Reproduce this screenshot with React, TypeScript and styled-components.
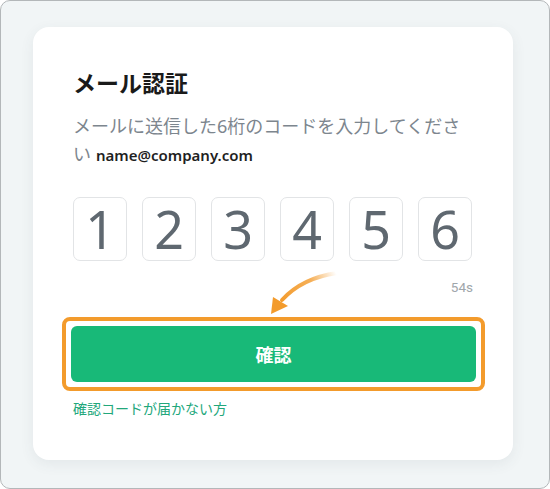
import styled, { createGlobalStyle } from "styled-components";

const GlobalStyle = createGlobalStyle`
  html, body {
    margin: 0;
    padding: 0;
    background: #ffffff;
  }
  * {
    box-sizing: border-box;
  }
`;

const digits = ["1", "2", "3", "4", "5", "6"];

const App = () => {
  return (
    <>
      <GlobalStyle />
      <Frame>
        <Card>
          <Title>メール認証</Title>
          <Description>
            メールに送信した6桁のコードを入力してください
            <Email>name@company.com</Email>
          </Description>
          <CodeRow>
            {digits.map((d) => (
              <DigitBox key={d}>{d}</DigitBox>
            ))}
          </CodeRow>
          <Timer>54s</Timer>
          <Highlight>
            <ConfirmButton type="button">確認</ConfirmButton>
          </Highlight>
          <HelpLink href="#">確認コードが届かない方</HelpLink>
          <Arrow viewBox="0 0 90 55" aria-hidden>
            <defs>
              <linearGradient id="tail" x1="74" y1="6" x2="17" y2="36" gradientUnits="userSpaceOnUse">
                <stop offset="0" stopColor="#f39b2c" stopOpacity="0" />
                <stop offset="0.4" stopColor="#f39b2c" stopOpacity="0.8" />
                <stop offset="1" stopColor="#f39b2c" stopOpacity="1" />
              </linearGradient>
            </defs>
            <path d="M75 6 Q40 11 20 33" fill="none" stroke="url(#tail)" strokeWidth="4" strokeLinecap="round" />
            <polygon points="9,47 11,30 26,39" fill="#f39b2c" />
          </Arrow>
        </Card>
      </Frame>
    </>
  );
};

export default App;

const Frame = styled.div`
  width: 550px;
  height: 489px;
  border: 1px solid #b3b7b9;
  border-radius: 10px;
  background: #f1f5f6;
  padding: 26px 0 0 32px;
`;

const Card = styled.div`
  position: relative;
  width: 480px;
  height: 433px;
  background: #ffffff;
  border-radius: 16px;
  box-shadow: 0 4px 14px rgba(60, 80, 90, 0.08);
  padding: 39px 40px 0 40px;
  display: flex;
  flex-direction: column;
  font-family: "Noto Sans", "Noto Sans CJK JP", sans-serif;
`;

const Title = styled.h1`
  margin: 0;
  font-size: 23px;
  line-height: 34px;
  font-weight: 700;
  color: #1a1a1a;
`;

const Description = styled.p`
  margin: 12px 0 0;
  font-size: 18px;
  line-height: 28px;
  color: #7d868e;
`;

const Email = styled.span`
  margin-left: 5px;
  font-size: 15px;
  font-weight: 600;
  color: #1f1f1f;
`;

const CodeRow = styled.div`
  margin-top: 28px;
  display: flex;
  gap: 15px;
`;

const DigitBox = styled.div`
  width: 54px;
  height: 64px;
  border: 1px solid #e2e4e6;
  border-radius: 7px;
  display: grid;
  place-items: center;
  font-family: "Noto Sans", sans-serif;
  font-size: 52px;
  font-weight: 400;
  line-height: 1;
  color: #5f6870;
`;

const Timer = styled.div`
  margin-top: 16px;
  align-self: flex-end;
  font-family: "Roboto", sans-serif;
  font-size: 13.5px;
  line-height: 20px;
  color: #a0a6ab;
`;

const Highlight = styled.div`
  margin: 20px -12px 0 -11px;
  padding: 5px;
  border: 4px solid #f39b2c;
  border-radius: 8px;
`;

const ConfirmButton = styled.button`
  display: block;
  width: 100%;
  height: 56px;
  border: none;
  border-radius: 6px;
  background: #18b978;
  color: #ffffff;
  font-family: "Noto Sans CJK JP", sans-serif;
  font-size: 18px;
  font-weight: 700;
`;

const HelpLink = styled.a`
  margin-top: 8px;
  align-self: flex-start;
  font-size: 14px;
  line-height: 20px;
  color: #22a77b;
  text-decoration: none;
`;

const Arrow = styled.svg`
  position: absolute;
  left: 229px;
  top: 240px;
  width: 90px;
  height: 55px;
  pointer-events: none;
`;
